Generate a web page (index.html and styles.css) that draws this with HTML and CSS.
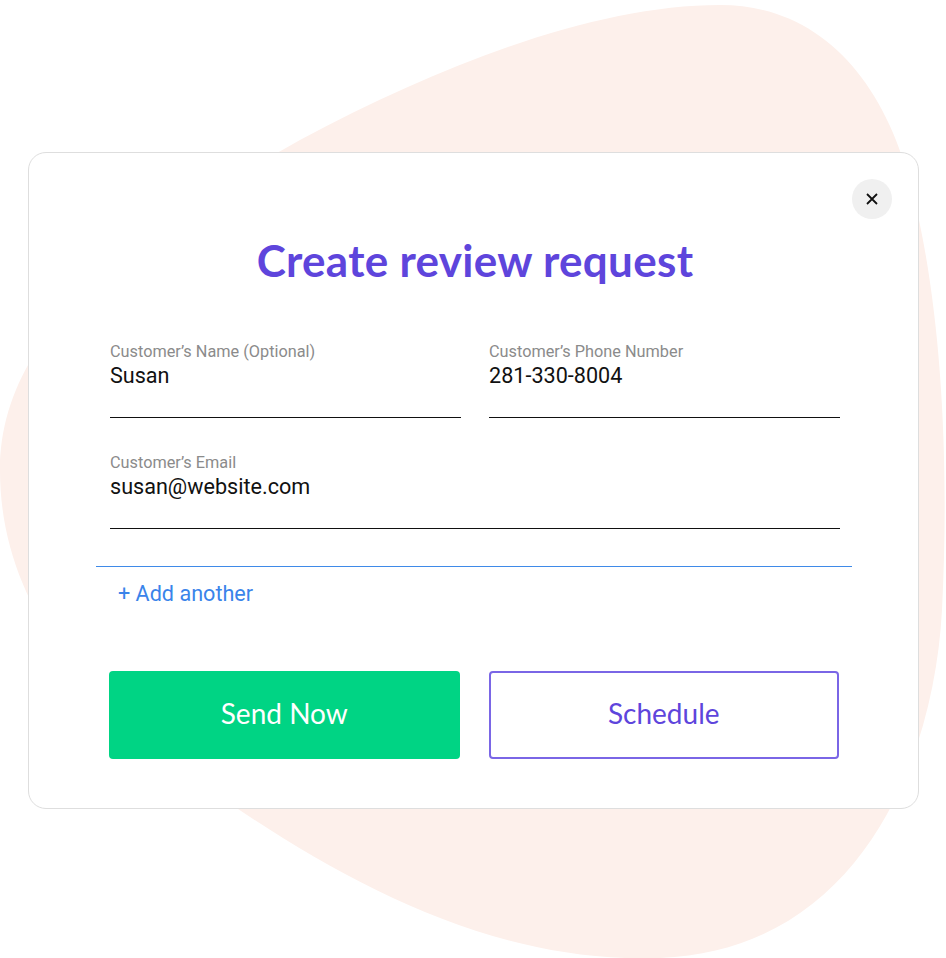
FILE: index.html
```html
<!DOCTYPE html>
<html lang="en">

<head>
    <meta charset="UTF-8" />
    <meta name="viewport" content="width=device-width, initial-scale=1.0" />
    <title>Create review request</title>
    <link rel="stylesheet" href="styles.css">
</head>

<body>
    <svg class="blob" width="946" height="958" viewBox="0 0 946 958" aria-hidden="true">
        <path d="M720 5 C820 5 885 80 912 190 C940 300 950 450 942 610 C934 760 860 950 660 958 C490 964 340 880 210 790 C95 710 0 610 0 470 C0 340 120 240 300 140 C450 60 600 5 720 5 Z" />
    </svg>

    <div class="request-card">
        <button class="close-btn" type="button" aria-label="Close">
            <svg width="12" height="12" viewBox="0 0 12 12">
                <path d="M1 1 L11 11 M11 1 L1 11" />
            </svg>
        </button>

        <h1>Create review request</h1>

        <form id="requestForm" class="request-form">
            <div class="field-row">
                <div class="field">
                    <label for="customerName">Customer’s Name (Optional)</label>
                    <input type="text" id="customerName" value="Susan" />
                </div>
                <div class="field">
                    <label for="customerPhone">Customer’s Phone Number</label>
                    <input type="text" id="customerPhone" value="281-330-8004" />
                </div>
            </div>
            <div class="field">
                <label for="customerEmail">Customer’s Email</label>
                <input type="text" id="customerEmail" value="susan@website.com" />
            </div>

            <div class="divider"></div>
            <a class="add-another" href="#">+ Add another</a>

            <div class="actions">
                <button type="submit" class="send-btn">Send Now</button>
                <button type="button" class="schedule-btn">Schedule</button>
            </div>
        </form>
    </div>
</body>

</html>
```

FILE: styles.css
```css
body {
    margin: 0;
    width: 946px;
    height: 958px;
    position: relative;
    overflow: hidden;
    background-color: #fff;
    font-family: Roboto, "Liberation Sans", Arial, sans-serif;
}

.blob {
    position: absolute;
    left: 0;
    top: 0;
}

.blob path {
    fill: #fdf0eb;
}

.request-card {
    position: relative;
    margin: 152px 0 0 28px;
    width: 891px;
    height: 657px;
    box-sizing: border-box;
    padding: 26px 78px 0 81px;
    background-color: #fff;
    border: 1px solid #dedede;
    border-radius: 18px;
}

.close-btn {
    position: absolute;
    top: 26px;
    right: 26px;
    width: 40px;
    height: 40px;
    border: none;
    border-radius: 50%;
    background-color: #f0f0f0;
    display: flex;
    align-items: center;
    justify-content: center;
    cursor: pointer;
    padding: 0;
}

.close-btn path {
    stroke: #111;
    stroke-width: 1.8;
    fill: none;
}

.request-card h1 {
    margin: 55px 0 0 0;
    text-align: center;
    font-family: Lato, "Noto Sans", sans-serif;
    font-weight: 700;
    font-size: 44px;
    line-height: 52px;
    color: #5e45dc;
    letter-spacing: 0.3px;
}

.request-form {
    display: flex;
    flex-direction: column;
    margin-top: 56px;
}

.field-row {
    display: grid;
    grid-template-columns: 1fr 1fr;
    gap: 28px;
    margin-bottom: 35px;
}

.field {
    display: flex;
    flex-direction: column;
    border-bottom: 1px solid #111;
}

.field label {
    font-size: 16.3px;
    line-height: 19px;
    color: #8b8b8b;
}

.field input {
    border: none;
    outline: none;
    padding: 0;
    margin: 1px 0 27px 0;
    font-family: Roboto, "Liberation Sans", Arial, sans-serif;
    font-size: 21.6px;
    line-height: 28px;
    height: 28px;
    color: #111;
    background: transparent;
}

.divider {
    margin: 37px -12px 0 -14px;
    border-top: 1px solid #3f8ae8;
}

.add-another {
    margin: 13px 0 0 8px;
    font-size: 21.6px;
    line-height: 28px;
    color: #3a84ea;
    text-decoration: none;
}

.actions {
    display: grid;
    grid-template-columns: 1fr 1fr;
    gap: 29px;
    margin: 63px 1px 0 -1px;
}

.actions button {
    height: 88px;
    padding: 0 0 5px 0;
    border-radius: 4px;
    font-family: Lato, "Noto Sans", sans-serif;
    font-size: 28px;
    cursor: pointer;
}

.send-btn {
    background-color: #00d484;
    border: none;
    color: #fff;
}

.schedule-btn {
    background-color: #fff;
    border: 2px solid #7a66e6;
    color: #5e45dc;
}
```
